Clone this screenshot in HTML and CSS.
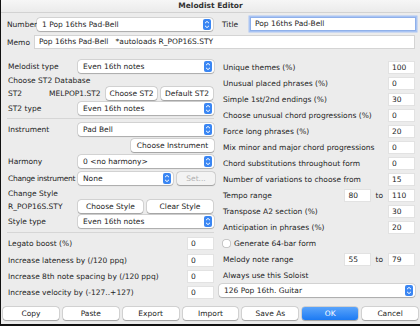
FILE: index.html
```html
<!DOCTYPE html>
<html lang="en">
<head>
    <meta charset="UTF-8">
    <title>Melodist Editor</title>
    <link rel="stylesheet" href="styles.css">
</head>
<body>
    <div class="window">
        <div class="titlebar">Melodist Editor</div>

        <div class="head">
            <div class="row">
                <span class="lbl lbl-number">Number</span>
                <div class="popup popup-number">1 Pop 16ths Pad-Bell
                    <svg class="stepper" viewBox="0 0 8 11"><rect width="8" height="11" rx="2"/><path d="M2 4.2 4 2.4 6 4.2M2 6.8 4 8.6 6 6.8"/></svg>
                </div>
                <span class="lbl lbl-title">Title</span>
                <div class="field field-title">Pop 16ths Pad-Bell</div>
            </div>
            <div class="row">
                <span class="lbl lbl-memo">Memo</span>
                <div class="field field-memo">Pop 16ths Pad-Bell&nbsp;&nbsp; *autoloads R_POP16S.STY</div>
            </div>
        </div>

        <div class="cols">
            <div class="left">
                <div class="row r16">
                    <span class="lbl lbl-left">Melodist type</span>
                    <div class="popup popup-left">Even 16th notes
                        <svg class="stepper" viewBox="0 0 8 11"><rect width="8" height="11" rx="2"/><path d="M2 4.2 4 2.4 6 4.2M2 6.8 4 8.6 6 6.8"/></svg>
                    </div>
                </div>
                <div class="row r13"><span class="lbl">Choose ST2 Database</span></div>
                <div class="row r13">
                    <span class="lbl lbl-st2">ST2</span>
                    <span class="lbl lbl-file">MELPOP1.ST2</span>
                    <button class="btn btn-st2">Choose ST2</button>
                    <button class="btn btn-default">Default ST2</button>
                </div>
                <div class="row r16">
                    <span class="lbl lbl-left">ST2 type</span>
                    <div class="popup popup-left">Even 16th notes
                        <svg class="stepper" viewBox="0 0 8 11"><rect width="8" height="11" rx="2"/><path d="M2 4.2 4 2.4 6 4.2M2 6.8 4 8.6 6 6.8"/></svg>
                    </div>
                </div>

                <div class="sep sep-top"></div>

                <div class="row r16">
                    <span class="lbl lbl-left">Instrument</span>
                    <div class="popup popup-left">Pad Bell
                        <svg class="stepper" viewBox="0 0 8 11"><rect width="8" height="11" rx="2"/><path d="M2 4.2 4 2.4 6 4.2M2 6.8 4 8.6 6 6.8"/></svg>
                    </div>
                </div>
                <div class="row r16 row-end">
                    <button class="btn btn-instr">Choose Instrument</button>
                </div>
                <div class="row r17">
                    <span class="lbl lbl-left">Harmony</span>
                    <div class="popup popup-left">0 &lt;no harmony&gt;
                        <svg class="stepper" viewBox="0 0 8 11"><rect width="8" height="11" rx="2"/><path d="M2 4.2 4 2.4 6 4.2M2 6.8 4 8.6 6 6.8"/></svg>
                    </div>
                </div>
                <div class="row r17">
                    <span class="lbl lbl-left lbl-tight">Change instrument</span>
                    <div class="popup popup-change">None
                        <svg class="stepper" viewBox="0 0 8 11"><rect width="8" height="11" rx="2"/><path d="M2 4.2 4 2.4 6 4.2M2 6.8 4 8.6 6 6.8"/></svg>
                    </div>
                    <button class="btn btn-set" disabled>Set...</button>
                </div>
                <div class="row r13"><span class="lbl">Change Style</span></div>
                <div class="row r13">
                    <span class="lbl lbl-left">R_POP16S.STY</span>
                    <button class="btn btn-style">Choose Style</button>
                    <button class="btn btn-clear">Clear Style</button>
                </div>
                <div class="row r16">
                    <span class="lbl lbl-left">Style type</span>
                    <div class="popup popup-left">Even 16th notes
                        <svg class="stepper" viewBox="0 0 8 11"><rect width="8" height="11" rx="2"/><path d="M2 4.2 4 2.4 6 4.2M2 6.8 4 8.6 6 6.8"/></svg>
                    </div>
                </div>

                <div class="sep sep-bottom"></div>

                <div class="row r17 spread">
                    <span class="lbl">Legato boost (%)</span>
                    <div class="field num">0</div>
                </div>
                <div class="row r16 spread">
                    <span class="lbl">Increase lateness by (/120 ppq)</span>
                    <div class="field num">0</div>
                </div>
                <div class="row r16 spread">
                    <span class="lbl">Increase 8th note spacing by (/120 ppq)</span>
                    <div class="field num">0</div>
                </div>
                <div class="row r16 spread">
                    <span class="lbl">Increase velocity by (-127..+127)</span>
                    <div class="field num">0</div>
                </div>
            </div>

            <div class="right">
                <div class="row r16 spread"><span class="lbl">Unique themes (%)</span><div class="field num">100</div></div>
                <div class="row r16 spread"><span class="lbl">Unusual placed phrases (%)</span><div class="field num">0</div></div>
                <div class="row r16 spread"><span class="lbl">Simple 1st/2nd endings (%)</span><div class="field num">30</div></div>
                <div class="row r16 spread"><span class="lbl">Choose unusual chord progressions (%)</span><div class="field num">0</div></div>
                <div class="row r16 spread"><span class="lbl">Force long phrases (%)</span><div class="field num">20</div></div>
                <div class="row r16 spread"><span class="lbl">Mix minor and major chord progressions</span><div class="field num">0</div></div>
                <div class="row r16 spread"><span class="lbl">Chord substitutions throughout form</span><div class="field num">0</div></div>
                <div class="row r16 spread"><span class="lbl">Number of variations to choose from</span><div class="field num">15</div></div>
                <div class="row r16">
                    <span class="lbl grow">Tempo range</span>
                    <div class="field num">80</div>
                    <span class="lbl lbl-to">to</span>
                    <div class="field num">110</div>
                </div>
                <div class="row r16 spread"><span class="lbl">Transpose A2 section (%)</span><div class="field num">30</div></div>
                <div class="row r16 spread"><span class="lbl">Anticipation in phrases (%)</span><div class="field num">20</div></div>
                <div class="row r16">
                    <span class="check"></span>
                    <span class="lbl">Generate 64-bar form</span>
                </div>
                <div class="row r16">
                    <span class="lbl grow">Melody note range</span>
                    <div class="field num">55</div>
                    <span class="lbl lbl-to">to</span>
                    <div class="field num">79</div>
                </div>
                <div class="row r16"><span class="lbl">Always use this Soloist</span></div>
                <div class="row r14">
                    <div class="popup popup-soloist">126 Pop 16th. Guitar
                        <svg class="stepper" viewBox="0 0 8 11"><rect width="8" height="11" rx="2"/><path d="M2 4.2 4 2.4 6 4.2M2 6.8 4 8.6 6 6.8"/></svg>
                    </div>
                </div>
            </div>
        </div>

        <div class="buttons">
            <button class="btn">Copy</button>
            <button class="btn">Paste</button>
            <button class="btn">Export</button>
            <button class="btn">Import</button>
            <button class="btn">Save As</button>
            <button class="btn btn-ok">OK</button>
            <button class="btn">Cancel</button>
        </div>
    </div>
</body>
</html>
```

FILE: styles.css
```css
* {
    margin: 0;
    padding: 0;
    box-sizing: border-box;
    font-family: 'DejaVu Sans', Verdana, sans-serif;
}

body {
    width: 420px;
    height: 326px;
    overflow: hidden;
    background: #ececec;
}

.window {
    width: 420px;
    height: 326px;
    background: #ececec;
    border-left: 1px solid #111;
    border-bottom: 2px solid #111;
    font-size: 7.5px;
    color: #1e1e1e;
    display: flex;
    flex-direction: column;
}

.titlebar {
    height: 13px;
    line-height: 12px;
    text-align: center;
    font-weight: bold;
    color: #333;
    background: linear-gradient(#f6f6f6, #ebebeb);
    border-bottom: 1px solid #d2d2d2;
}

.row {
    display: flex;
    align-items: center;
}

.r13 { height: 13px; }
.r14 { height: 14px; }
.r16 { height: 16px; }
.r17 { height: 17px; }

.spread {
    justify-content: space-between;
}

.row-end {
    justify-content: flex-end;
}

.grow {
    flex: 1;
}

.lbl {
    white-space: nowrap;
    flex-shrink: 0;
}

.lbl-tight {
    letter-spacing: -0.3px;
}

/* header rows */
.head {
    padding: 4px 6px 0 6px;
    display: flex;
    flex-direction: column;
    gap: 4px;
}

.lbl-number { width: 30px; }
.lbl-title { width: 31px; margin-left: 6px; padding-left: 3px; }
.lbl-memo { width: 27px; }

.popup {
    position: relative;
    flex-shrink: 0;
    height: 13px;
    line-height: 13px;
    padding-left: 5px;
    background: #fff;
    border-radius: 3px;
    box-shadow: 0 0 0 0.5px rgba(0, 0, 0, 0.18), 0 0.5px 1px rgba(0, 0, 0, 0.2);
    white-space: nowrap;
}

.stepper {
    position: absolute;
    right: 2px;
    top: 1px;
    width: 8px;
    height: 11px;
}

.stepper rect {
    fill: #3a86f3;
}

.stepper path {
    fill: none;
    stroke: #fff;
    stroke-width: 1;
}

.popup-number { width: 176px; }
.popup-left { width: 136px; }
.popup-change { width: 95px; margin-right: 4px; }
.popup-soloist { width: 196px; }

.field {
    flex-shrink: 0;
    height: 14px;
    line-height: 12px;
    padding-left: 3px;
    background: #fff;
    border: 1px solid #d4d4d4;
    white-space: nowrap;
}

.field-title {
    width: 166px;
    border: 1px solid #8fb0ea;
    box-shadow: 0 0 0 1.5px #a9c4f3;
    padding-left: 4px;
}

.field-memo {
    width: 381px;
    padding-left: 4px;
}

.num {
    width: 27px;
    height: 13px;
    border-color: #e2e2e2;
}

/* columns */
.cols {
    display: flex;
    padding: 9px 0 0 6px;
}

.left {
    width: 207px;
    display: flex;
    flex-direction: column;
}

.left .lbl {
    padding-left: 1px;
}

.lbl-left { width: 71px; }
.lbl-st2 { width: 41px; }
.lbl-file { width: 58px; }

.sep {
    height: 1px;
    background: #d6d6d6;
}

.sep-top {
    margin: 2px 0 2px 0;
}

.sep-bottom {
    margin: 3px 0 2px 0;
}

.right {
    width: 196px;
    margin: 1px 0 0 5px;
    display: flex;
    flex-direction: column;
}

.right .lbl {
    padding-left: 4px;
}

.right .lbl-to {
    padding: 0 5px 0 4px;
}

.check {
    width: 7px;
    height: 7px;
    margin-left: 4px;
    background: #fff;
    border-radius: 2px;
    box-shadow: 0 0 0 0.5px rgba(0, 0, 0, 0.3);
}

.check + .lbl {
    padding-left: 4px;
}

.btn {
    flex-shrink: 0;
    height: 13px;
    font-size: 7.5px;
    color: #1e1e1e;
    background: #fff;
    border: none;
    border-radius: 3px;
    box-shadow: 0 0 0 0.5px rgba(0, 0, 0, 0.18), 0 0.5px 1px rgba(0, 0, 0, 0.25);
    white-space: nowrap;
}

.btn:disabled {
    color: #b0b0b0;
    background: #f3f3f3;
}

.btn-st2 { width: 51px; margin-right: 4px; }
.btn-default { width: 52px; }
.btn-instr { width: 83px; }
.btn-set { width: 38px; }
.btn-style { width: 65px; margin-right: 4px; }
.btn-clear { width: 66px; }

/* bottom buttons */
.buttons {
    margin-top: auto;
    margin-bottom: 4px;
    padding: 0 2px 0 2px;
    display: flex;
    gap: 4px;
}

.buttons .btn {
    flex: 1;
}

.btn-ok {
    color: #fff;
    background: linear-gradient(#5aa4fb, #1c7af3);
}
```
